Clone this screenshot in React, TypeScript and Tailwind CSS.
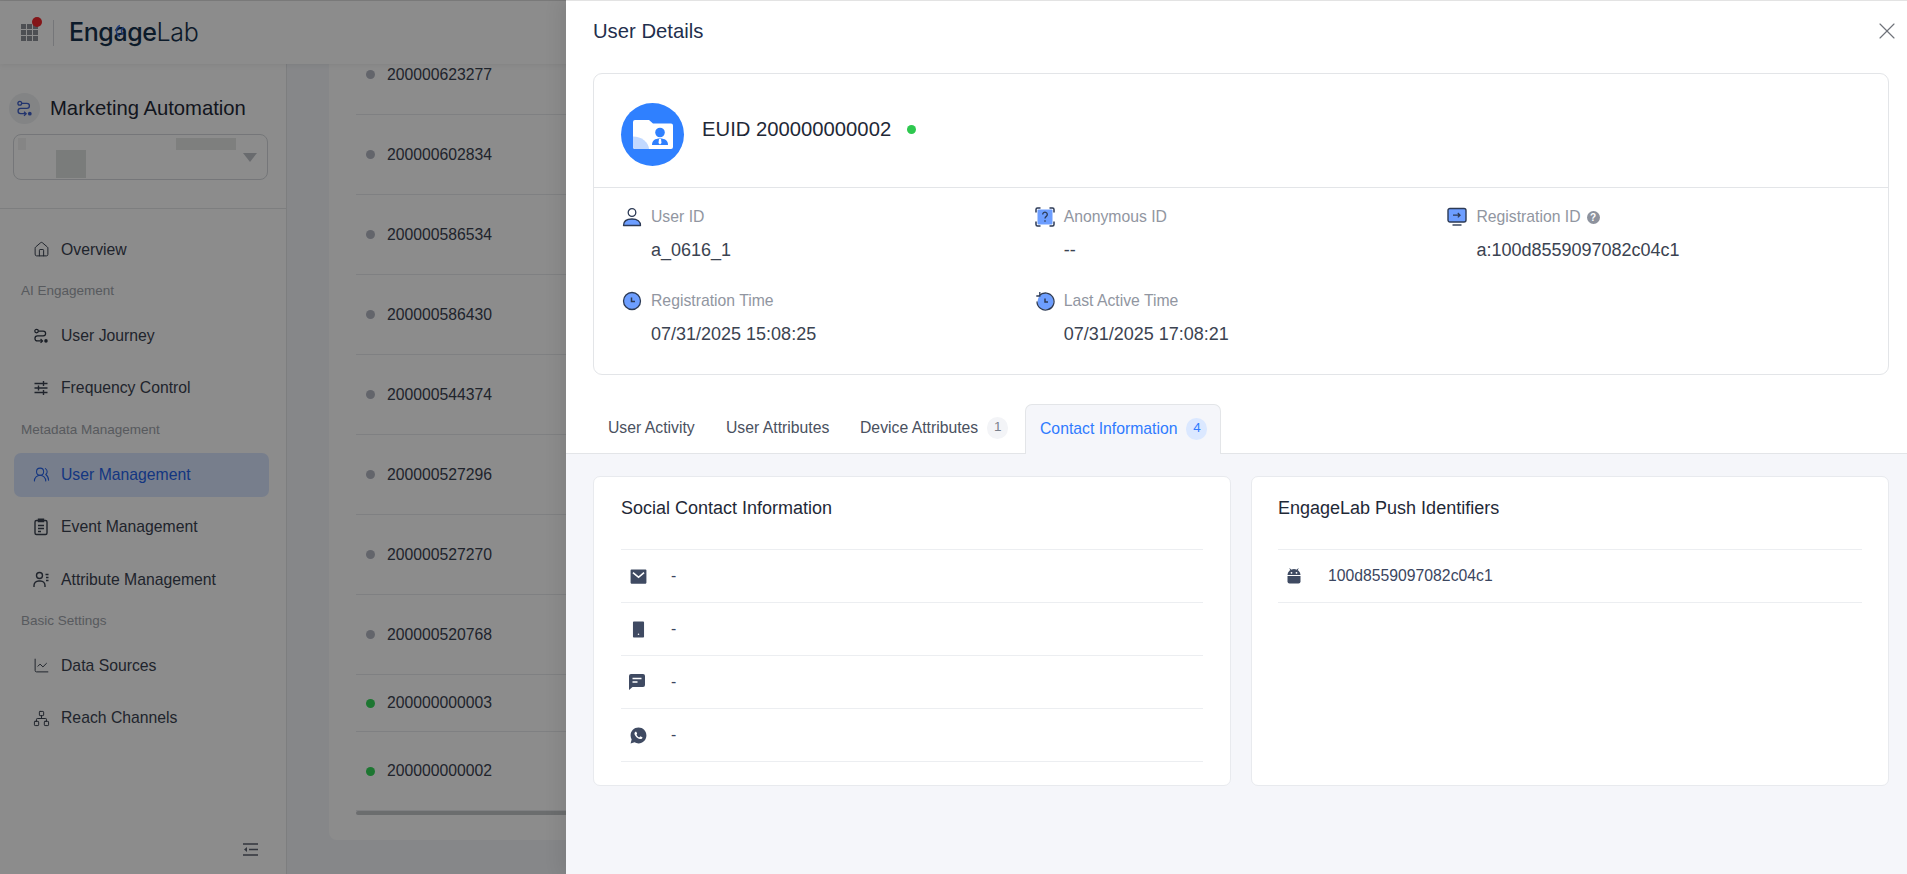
import type { ReactNode } from 'react'
import { RiMailFill, RiSmartphoneFill, RiWhatsappFill } from 'react-icons/ri'
import { ChartLine, House, Network, UsersRound, X } from 'lucide-react'

function JourneyIcon({ size, line, dot }: { size: number; line: string; dot: string }) {
  return (
    <svg width={size} height={size} viewBox="0 0 18 18" fill="none" stroke={line} strokeWidth="1.4">
      <circle cx="4" cy="3.5" r="2" />
      <path d="M6 3.5h5.5a2.7 2.7 0 0 1 0 5.4H5a2.8 2.8 0 0 0 0 5.6h5" />
      <path d="M8.5 12.4l2.2 2.1-2.2 2.1" />
      <circle cx="14.6" cy="14.5" r="2" fill={dot} stroke="none" />
    </svg>
  )
}

function FrequencyIcon() {
  return (
    <svg width="16" height="16" viewBox="0 0 16 16" fill="none" stroke="currentColor" strokeWidth="1.4">
      <path d="M1.5 3.5h13M1.5 8h13M1.5 12.5h13M10.5 1v5M5.5 5.5v5M10.5 10v5" />
    </svg>
  )
}

function ClipboardIcon() {
  return (
    <svg width="16" height="18" viewBox="0 0 16 18" fill="none" stroke="currentColor" strokeWidth="1.4">
      <rect x="2" y="2.5" width="12" height="14" rx="1.5" />
      <path d="M5.5 1.2h5v2.4h-5zM5 7.5h6M5 10.5h6M5 13.5h3" />
    </svg>
  )
}

function AttributeUserIcon() {
  return (
    <svg width="17" height="17" viewBox="0 0 17 17" fill="none" stroke="currentColor" strokeWidth="1.4">
      <circle cx="6.5" cy="4.5" r="3" />
      <path d="M1 16v-1.5A4.5 4.5 0 0 1 5.5 10h2a4.5 4.5 0 0 1 4.5 4.5V16M12.5 3.5h3M13 6.5h2.5M13 9.500h2.500" />
    </svg>
  )
}

function ChatIcon() {
  return (
    <svg width="16" height="16" viewBox="0 0 16 16">
      <path d="M2 0h12a2 2 0 0 1 2 2v9a2 2 0 0 1-2 2H3.500L0 16V2a2 2 0 0 1 2-2z" fill="currentColor" />
      <path d="M3.500 4.500h9M3.500 8h5" stroke="#fff" strokeWidth="1.400" />
    </svg>
  )
}

function AndroidIcon() {
  return (
    <svg width="16" height="16" viewBox="0 0 16 16">
      <path d="M1.500 7a6.500 6 0 0 1 13 0z" fill="currentColor" />
      <path d="M3.800 .500l1.500 2.500M12.200 .500l-1.500 2.500" stroke="currentColor" strokeWidth="1" />
      <circle cx="5.500" cy="4.800" r=".9" fill="#fff" />
      <circle cx="10.500" cy="4.800" r=".9" fill="#fff" />
      <path d="M1.500 8h13v5.500a2 2 0 0 1-2 2h-9a2 2 0 0 1-2-2z" fill="currentColor" />
    </svg>
  )
}

const navGroups: { title?: string; items: { label: string; icon: ReactNode; active?: boolean }[] }[] = [
  { items: [{ label: 'Overview', icon: <House size={17} strokeWidth={1.4} /> }] },
  {
    title: 'AI Engagement',
    items: [
      { label: 'User Journey', icon: <JourneyIcon size={16} line="#2f3744" dot="#2f3744" /> },
      { label: 'Frequency Control', icon: <FrequencyIcon /> },
    ],
  },
  {
    title: 'Metadata Management',
    items: [
      { label: 'User Management', icon: <UsersRound size={17} strokeWidth={1.5} />, active: true },
      { label: 'Event Management', icon: <ClipboardIcon /> },
      { label: 'Attribute Management', icon: <AttributeUserIcon /> },
    ],
  },
  {
    title: 'Basic Settings',
    items: [
      { label: 'Data Sources', icon: <ChartLine size={17} strokeWidth={1.4} /> },
      { label: 'Reach Channels', icon: <Network size={17} strokeWidth={1.4} /> },
    ],
  },
]

const userRows = [
  { id: '200000623277', h: 'h-[80px]' },
  { id: '200000602834', h: 'h-[80px]' },
  { id: '200000586534', h: 'h-[80px]' },
  { id: '200000586430', h: 'h-[80px]' },
  { id: '200000544374', h: 'h-[80px]' },
  { id: '200000527296', h: 'h-[80px]' },
  { id: '200000527270', h: 'h-[80px]' },
  { id: '200000520768', h: 'h-[80px]' },
  { id: '200000000003', h: 'h-[57px]', online: true },
  { id: '200000000002', h: 'h-[79px]', online: true },
]

function Sidebar() {
  return (
    <aside className="flex h-full w-[287px] shrink-0 flex-col border-r border-[#e3e5e8] bg-white">
      <div className="h-[145px] shrink-0 border-b border-[#e3e5e8] pl-[13px] pt-[28px]">
        <div className="flex h-[32px] items-center">
          <div className="-ml-[4px] flex h-[31px] w-[31px] items-center justify-center rounded-full bg-[#eef0f3]">
            <JourneyIcon size={17} line="#3f5fc9" dot="#3f5fc9" />
          </div>
          <span className="ml-[10px] text-[20.25px] text-[#1f2937]">Marketing Automation</span>
        </div>
        <div className="relative mt-[10px] h-[46px] w-[255px] rounded-[8px] border border-[#d5d8dc]">
          <div className="absolute left-[4px] top-[3px] h-[12px] w-[8px] bg-[#f2f3f3]" />
          <div className="absolute left-[42px] top-[15px] h-[28px] w-[30px] bg-[#dfe2e1]" />
          <div className="absolute left-[162px] top-[3px] h-[12px] w-[60px] bg-[#e5e7e6]" />
          <svg className="absolute left-[229px] top-[18px]" width="14" height="9" viewBox="0 0 14 9">
            <path d="M0 0h14L7 9z" fill="#bfc3c9" />
          </svg>
        </div>
      </div>

      <nav className="flex-1 pl-[14px] pr-[17px] pt-[18.5px]">
        {navGroups.map((group, i) => (
          <div key={i}>
            {group.title && (
              <div className="mb-[11.75px] flex h-[22px] items-center pl-[7px] text-[13.5px] text-[#a0a4ab]">{group.title}</div>
            )}
            {group.items.map((item) => (
              <div
                key={item.label}
                className={`mb-[8.5px] flex h-[44px] items-center rounded-[7px] pl-[19px] text-[15.75px] ${
                  item.active ? 'bg-[#d9e6ff] text-[#2563eb]' : 'text-[#3b4351]'
                }`}
              >
                <span className="flex w-[28px] shrink-0 items-center">{item.icon}</span>
                {item.label}
              </div>
            ))}
          </div>
        ))}
      </nav>

      <div className="flex h-[50px] items-center justify-end pr-[28px] text-[#5b6270]">
        <svg width="15" height="13" viewBox="0 0 15 13" fill="none" stroke="currentColor" strokeWidth="1.4">
          <path d="M0 1h15M6 6.500h9M0 12h15" />
          <path d="M4 4L1 6.500 4 9z" fill="currentColor" stroke="none" />
        </svg>
      </div>
    </aside>
  )
}

function UserList() {
  return (
    <main className="h-full flex-1 overflow-hidden bg-[#f5f6fa] pl-[42px]">
      <div className="-mt-[29px] h-[805px] rounded-b-[8px] bg-white pl-[27px]">
        {userRows.map((row) => (
          <div key={row.id} className={`flex items-center border-b border-[#e8eaed] ${row.h}`}>
            <span
              className={`ml-[10px] h-[9px] w-[9px] rounded-full ${row.online ? 'bg-[#35d85a]' : 'bg-[#b4b8c4]'}`}
            />
            <span className="ml-[12px] text-[15.75px] text-[#3b4351]">{row.id}</span>
          </div>
        ))}
        <div className="h-[4px] w-full rounded-full bg-[#c4c6c9]" />
      </div>
    </main>
  )
}

function Logo() {
  return (
    <div className="flex items-center font-['Inter',sans-serif] text-[25px] tracking-[-0.4px] text-[#17324d]">
      <span className="font-medium">Eng</span>
      <span className="relative font-medium">
        a
        <svg className="absolute left-[1px] top-[10px]" width="11" height="14" viewBox="0 0 11 14" fill="none" stroke="#3a6fe0" strokeWidth="1.500">
          <path d="M6 1.500a6 6 0 0 0 0 11M9.500 3.500a4 4 0 0 0 0 7" />
        </svg>
      </span>
      <span className="font-medium">ge</span>
      <span className="font-light">Lab</span>
    </div>
  )
}

function Header() {
  return (
    <header className="relative z-10 flex h-[63px] shrink-0 items-center bg-white pl-[21px] shadow-[0_1px_6px_rgba(0,0,0,0.08)]">
      <div className="relative grid w-[17px] grid-cols-3 gap-[1px]">
        {Array.from({ length: 9 }).map((_, i) => (
          <span key={i} className="h-[5px] w-[5px] bg-[#8d9197]" />
        ))}
        <span className="absolute -right-[4px] -top-[7px] h-[10px] w-[10px] rounded-full bg-[#f0272c]" />
      </div>
      <div className="ml-[15px] mr-[15px] h-[26px] w-px bg-[#d5d8dc]" />
      <Logo />
    </header>
  )
}

function UserIcon() {
  return (
    <svg width="20" height="20" viewBox="0 0 20 20" stroke="#2c3a55" strokeWidth="1.300">
      <circle cx="10" cy="5.500" r="3.800" fill="#fff" />
      <path d="M1.500 18.500c0-4 3-6.500 8.500-6.500s8.500 2.500 8.500 6.500z" fill="#6d9eff" strokeLinejoin="round" />
    </svg>
  )
}

function ClockIcon() {
  return (
    <svg width="20" height="20" viewBox="0 0 20 20" stroke="#2c3a55" strokeWidth="1.300" fill="none">
      <circle cx="10" cy="10" r="8.500" fill="#6d9eff" />
      <path d="M9.500 6.500v4H13" strokeWidth="1.500" />
    </svg>
  )
}

function AnonymousIcon() {
  return (
    <svg width="20" height="20" viewBox="0 0 20 20" fill="none" stroke="#2c3a55" strokeWidth="1.500">
      <rect x="2.500" y="2.500" width="15" height="15" rx="1" fill="#6d9eff" stroke="none" />
      <path d="M1 5.500V2.500A1.500 1.500 0 0 1 2.500 1h3M14.500 1h3A1.500 1.500 0 0 1 19 2.500v3M19 14.500v3a1.500 1.500 0 0 1-1.500 1.500h-3M5.500 19h-3A1.500 1.500 0 0 1 1 17.500v-3" />
      <path d="M7.700 7.500a2.300 2.300 0 1 1 3.600 1.900c-.9.6-1.300 1-1.300 2.100M10 13.200v1.500" strokeWidth="1.300" />
    </svg>
  )
}

function DeviceIcon() {
  return (
    <svg width="20" height="20" viewBox="0 0 20 20" fill="none" stroke="#2c3a55" strokeWidth="1.400">
      <rect x="1" y="1.500" width="18" height="13.500" rx="2" fill="#6d9eff" />
      <path d="M6 8.200h7M10.800 6l2.300 2.200-2.300 2.200" strokeWidth="1.200" />
      <path d="M5.500 18h9" />
    </svg>
  )
}

function ActiveIcon() {
  return (
    <svg width="20" height="20" viewBox="0 0 20 20" fill="none" stroke="#2c3a55" strokeWidth="1.300">
      <circle cx="10.500" cy="10.500" r="8" fill="#6d9eff" stroke="none" />
      <path d="M4.300 4.700A8.500 8.500 0 1 1 2 10.500M4.800 1v4h-3.500" />
      <path d="M10 7.500v3.500h3" strokeWidth="1.500" />
    </svg>
  )
}

function AvatarIcon() {
  return (
    <div className="mt-[7px] flex h-[63px] w-[63px] shrink-0 items-center justify-center rounded-full bg-[#2f80ff]">
      <svg width="40" height="32" viewBox="0 0 40 32">
        <path d="M2 2h14l4 3.500h18a2 2 0 0 1 2 2V29a2 2 0 0 1-2 2H2a2 2 0 0 1-2-2V4a2 2 0 0 1 2-2z" fill="#fff" />
        <path d="M0 18.500a16 13 0 0 1 16 12.500H2a2 2 0 0 1-2-2z" fill="#c2d9ff" />
        <circle cx="27" cy="14.500" r="4.800" fill="#2f80ff" />
        <path d="M19 27c0-4.500 3-6.500 8-6.500s8 2 8 6.500z" fill="#2f80ff" />
        <path d="M26 21h2l.5 4-1.500 1.500L25.500 25z" fill="#fff" />
      </svg>
    </div>
  )
}

function InfoItem({ icon, label, value, hint }: { icon: ReactNode; label: string; value: string; hint?: boolean }) {
  return (
    <div>
      <div className="flex h-[24px] items-center">
        <span className="flex w-[29px] shrink-0 items-center">{icon}</span>
        <span className="text-[15.75px] text-[#9196a1]">{label}</span>
        {hint && (
          <span className="ml-[6px] flex h-[13px] w-[13px] items-center justify-center rounded-full bg-[#8d929d] text-[10px] font-bold text-white">
            ?
          </span>
        )}
      </div>
      <div className="mt-[9px] flex h-[24px] items-center pl-[29px] text-[18px] text-[#3b4351]">{value}</div>
    </div>
  )
}

function ContactRow({ icon, text }: { icon: ReactNode; text: string }) {
  return (
    <div className="flex h-[53px] items-center border-b border-[#eceef1] pl-[8px] text-[15.750px] text-[#3b4660]">
      <span className="flex w-[42px] shrink-0 items-center text-[#3f4a62]">{icon}</span>
      {text}
    </div>
  )
}

function TabBadge({ children, active }: { children: ReactNode; active?: boolean }) {
  return (
    <span
      className={`ml-[9px] flex h-[22px] w-[21px] items-center justify-center rounded-full text-[13.500px] ${
        active ? 'bg-[#dbe8ff] text-[#2f7bff]' : 'bg-[#f3f4f7] text-[#7a808c]'
      }`}
    >
      {children}
    </span>
  )
}

function Drawer() {
  return (
    <div className="absolute bottom-0 right-0 top-0 z-30 flex w-[1341px] flex-col border-t border-[#e3e3e3] bg-white shadow-[-6px_0_16px_rgba(0,0,0,0.08)]">
      <div className="pl-[27px] pr-[18px]">
        <div className="flex h-[60px] items-center justify-between">
          <h1 className="text-[20.25px] font-normal text-[#1f2f4d]">User Details</h1>
          <X size={28} strokeWidth={1} className="-mr-[12px] text-[#6f737a]" />
        </div>

        <section className="mt-[12px] h-[302px] rounded-[9px] border border-[#e3e5e8]">
          <div className="flex h-[114px] items-center border-b border-[#e3e5e8] pl-[27px]">
            <AvatarIcon />
            <span className="-mt-[3px] ml-[18px] text-[20.250px] text-[#1f2937]">EUID 200000000002</span>
            <span className="-mt-[3px] ml-[16px] h-[9px] w-[9px] rounded-full bg-[#2ec84f]" />
          </div>
          <div className="grid grid-cols-[412.7px_412.7px_412.7px] gap-y-[27px] pl-[28px] pt-[17px]">
            <InfoItem icon={<UserIcon />} label="User ID" value="a_0616_1" />
            <InfoItem icon={<AnonymousIcon />} label="Anonymous ID" value="--" />
            <InfoItem icon={<DeviceIcon />} label="Registration ID" value="a:100d8559097082c04c1" hint />
            <InfoItem icon={<ClockIcon />} label="Registration Time" value="07/31/2025 15:08:25" />
            <InfoItem icon={<ActiveIcon />} label="Last Active Time" value="07/31/2025 17:08:21" />
          </div>
        </section>
      </div>

      <div className="mt-[29px] flex h-[50px] shrink-0 items-stretch border-b border-[#e3e5e8] pl-[27px] text-[15.750px] text-[#4a5160]">
        <div className="flex w-[133px] items-center pb-[2px] pl-[15px]">User Activity</div>
        <div className="flex w-[134px] items-center pb-[2px]">User Attributes</div>
        <div className="flex w-[165px] items-center pb-[2px]">
          Device Attributes
          <TabBadge>1</TabBadge>
        </div>
        <div className="-mb-px flex w-[196px] items-center rounded-t-[7px] border border-b-0 border-[#e3e5e8] bg-[#f5f6fa] pb-[2px] pl-[14px] text-[#2f7bff]">
          Contact Information
          <TabBadge active>4</TabBadge>
        </div>
      </div>

      <div className="flex-1 bg-[#f5f6fa] pl-[27px] pr-[18px] pt-[22px]">
        <div className="grid h-[310px] grid-cols-2 gap-[20px]">
          <section className="rounded-[7px] border border-[#e8eaee] bg-white px-[27px] pt-[20px]">
            <h2 className="flex h-[22px] items-center text-[18px] font-normal text-[#1f2937]">Social Contact Information</h2>
            <div className="mt-[30px] border-t border-[#eceef1]">
              <ContactRow icon={<RiMailFill size={19} />} text="-" />
              <ContactRow icon={<RiSmartphoneFill size={19} />} text="-" />
              <ContactRow icon={<ChatIcon />} text="-" />
              <ContactRow icon={<RiWhatsappFill size={19} />} text="-" />
            </div>
          </section>
          <section className="rounded-[7px] border border-[#e8eaee] bg-white px-[26px] pt-[20px]">
            <h2 className="flex h-[22px] items-center text-[18px] font-normal text-[#1f2937]">EngageLab Push Identifiers</h2>
            <div className="mt-[30px] border-t border-[#eceef1]">
              <ContactRow icon={<AndroidIcon />} text="100d8559097082c04c1" />
            </div>
          </section>
        </div>
      </div>
    </div>
  )
}

export default function App() {
  return (
    <div className="relative h-screen w-full overflow-hidden font-['Liberation_Sans',Arial,sans-serif]">
      <div className="flex h-full flex-col border-t border-[#e3e3e3]">
        <Header />
        <div className="flex min-h-0 flex-1">
          <Sidebar />
          <UserList />
        </div>
      </div>
      <div className="absolute inset-0 z-20 bg-black/45" />
      <Drawer />
    </div>
  )
}
